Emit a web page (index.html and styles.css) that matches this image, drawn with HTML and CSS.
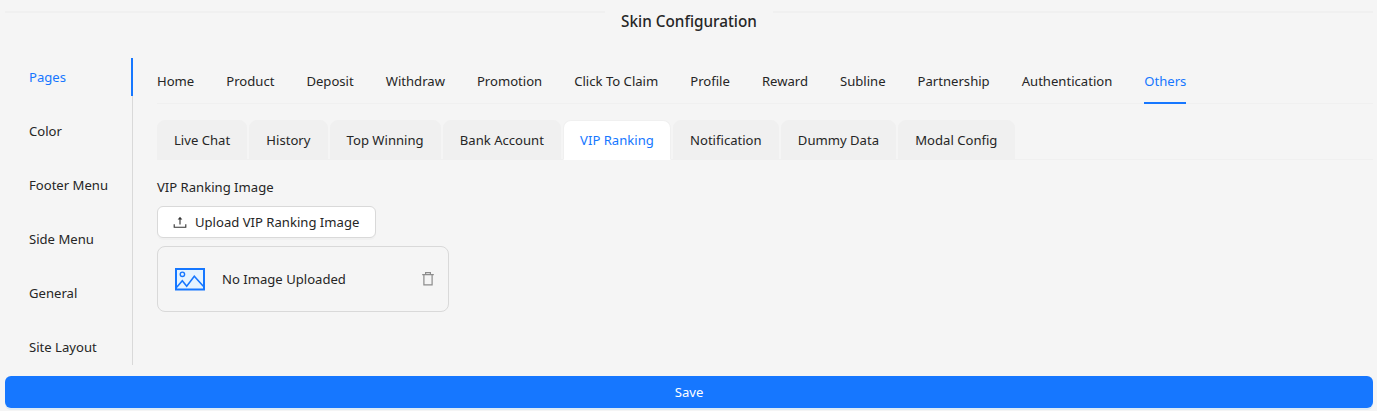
FILE: index.html
```html
<!DOCTYPE html>
<html lang="en">
<head>
  <meta charset="UTF-8">
  <title>Skin Configuration</title>
  <link rel="stylesheet" href="styles.css">
</head>
<body>
  <div class="title-divider">
    <span class="title-text">Skin Configuration</span>
  </div>

  <div class="layout">
    <!-- Side tabs -->
    <div class="side-tabs">
      <div class="side-tab active">Pages</div>
      <div class="side-tab">Color</div>
      <div class="side-tab">Footer Menu</div>
      <div class="side-tab">Side Menu</div>
      <div class="side-tab">General</div>
      <div class="side-tab">Site Layout</div>
    </div>

    <div class="content">
      <!-- Page tabs -->
      <div class="page-tabs">
        <div class="page-tab">Home</div>
        <div class="page-tab">Product</div>
        <div class="page-tab">Deposit</div>
        <div class="page-tab">Withdraw</div>
        <div class="page-tab">Promotion</div>
        <div class="page-tab">Click To Claim</div>
        <div class="page-tab">Profile</div>
        <div class="page-tab">Reward</div>
        <div class="page-tab">Subline</div>
        <div class="page-tab">Partnership</div>
        <div class="page-tab">Authentication</div>
        <div class="page-tab active">Others</div>
      </div>

      <!-- Card tabs -->
      <div class="card-tabs">
        <div class="card-tab">Live Chat</div>
        <div class="card-tab">History</div>
        <div class="card-tab">Top Winning</div>
        <div class="card-tab">Bank Account</div>
        <div class="card-tab active">VIP Ranking</div>
        <div class="card-tab">Notification</div>
        <div class="card-tab">Dummy Data</div>
        <div class="card-tab">Modal Config</div>
      </div>

      <div class="field-label">VIP Ranking Image</div>
      <button class="upload-button" type="button">
        <svg class="upload-icon" viewBox="0 0 14 14" width="14" height="14">
          <path d="M7 9.6V3.5M1.2 9.3v2.9h11.6V9.3" fill="none" stroke="#333" stroke-width="1.1"/>
          <path d="M7 1.7 4.7 4.4h4.6z" fill="#333"/>
        </svg>
        Upload VIP Ranking Image
      </button>

      <div class="upload-item">
        <svg class="image-icon" viewBox="0 0 30 24" width="30" height="24">
          <rect x="1" y="2" width="28" height="20.5" fill="#e6f4ff" stroke="#1677ff" stroke-width="2"/>
          <circle cx="7.4" cy="7.3" r="2.2" fill="none" stroke="#1677ff" stroke-width="1.4"/>
          <path d="M1.7 20.2 7.3 13.7l4.4 5.6 7.6-10 9 10" fill="none" stroke="#1677ff" stroke-width="1.6"/>
        </svg>
        <span class="item-name">No Image Uploaded</span>
        <svg class="trash-icon" viewBox="0 0 14 14" width="14" height="14">
          <path d="M1.2 2.6h11.6M4.6 2.6V.7h4.8v1.9M2.9 2.6v10.2h8.2V2.6" fill="none" stroke="#8c8c8c" stroke-width="1.2"/>
        </svg>
      </div>
    </div>
  </div>

  <button class="save-button" type="button">Save</button>
</body>
</html>
```

FILE: styles.css
```css
* {
  box-sizing: border-box;
  margin: 0;
  padding: 0;
}

body {
  font-family: 'Noto Sans', sans-serif;
  font-size: 13.1px;
  line-height: 22px;
  color: #262626;
  background: #f5f5f5;
  height: 411px;
  overflow: hidden;
  padding: 0 4px 0 5px;
}

.title-divider {
  display: flex;
  align-items: center;
  height: 24px;
  margin-top: 9px;
  margin-bottom: 25px;
  font-size: 15.3px;
  font-weight: 500;
}

.title-divider::before,
.title-divider::after {
  content: "";
  flex: 1;
  height: 2px;
  margin-top: -18px;
  background: #f0f0f0;
}

.title-text {
  padding: 0 16px;
}

.layout {
  display: flex;
  height: 307px;
}

/* Side tabs */
.side-tabs {
  width: 128px;
  flex-shrink: 0;
  border-right: 1px solid #d9d9d9;
}

.side-tab {
  height: 38px;
  padding: 8px 0 8px 24px;
  margin-bottom: 16px;
  white-space: nowrap;
}

.side-tab:last-child {
  margin-bottom: 0;
}

.side-tab.active {
  color: #1677ff;
  box-shadow: 1px 0 0 0 #1677ff, inset -1px 0 0 0 #1677ff;
}

.content {
  flex: 1;
  min-width: 0;
  padding-left: 24px;
}

/* Page tabs */
.page-tabs {
  display: flex;
  gap: 32px;
  height: 46px;
  border-bottom: 1px solid #f0f0f0;
  margin-bottom: 16px;
}

.page-tab {
  height: 46px;
  padding: 12px 0;
}

.page-tab.active {
  color: #1677ff;
  border-bottom: 2px solid #1677ff;
}

/* Card tabs */
.card-tabs {
  display: flex;
  gap: 2px;
  height: 40px;
  border-bottom: 1px solid #f0f0f0;
  margin-bottom: 16px;
}

.card-tab {
  height: 40px;
  padding: 8px 16.2px 8px 16px;
  background: #f0f0f0;
  border: 1px solid #f0f0f0;
  border-radius: 8px 8px 0 0;
}

.card-tab.active {
  background: #fff;
  color: #1677ff;
  border-bottom-color: #fff;
}

.field-label {
  margin-bottom: 8px;
}

.upload-button {
  display: flex;
  align-items: center;
  gap: 8px;
  height: 32px;
  padding: 0 16px 0 15px;
  font: inherit;
  color: inherit;
  background: #fff;
  border: 1px solid #d9d9d9;
  border-radius: 6px;
  box-shadow: 0 2px 0 rgba(0, 0, 0, 0.02);
}

.upload-item {
  display: flex;
  align-items: center;
  width: 292px;
  height: 66px;
  margin-top: 8px;
  padding: 0 13px 0 17px;
  border: 1px solid #d9d9d9;
  border-radius: 8px;
}

.item-name {
  flex: 1;
  padding-left: 17px;
}

.save-button {
  display: block;
  width: 100%;
  height: 32px;
  margin-top: 11px;
  font: inherit;
  color: #fff;
  background: #1677ff;
  border: none;
  border-radius: 6px;
  box-shadow: 0 2px 0 rgba(5, 145, 255, 0.1);
}
```
